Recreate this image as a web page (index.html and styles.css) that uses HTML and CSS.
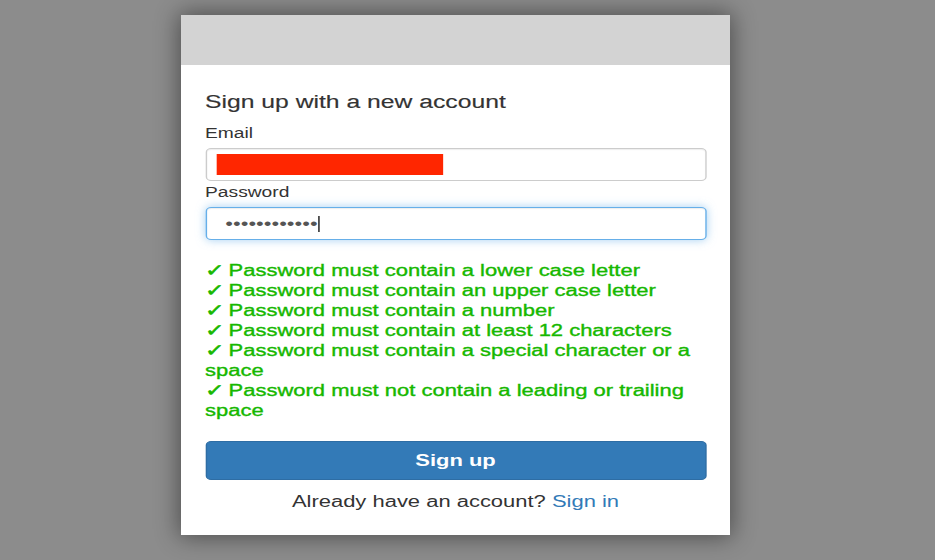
FILE: index.html
```html
<!DOCTYPE html>
<html lang="en">
<head>
<meta charset="utf-8">
<title>Sign up</title>
<link rel="stylesheet" href="styles.css">
</head>
<body>
<div class="page">
  <div class="card">
    <div class="card-header"></div>
    <div class="card-body">
      <div class="form">
        <div class="title">Sign up with a new account</div>
        <div class="label label-email">Email</div>
        <div class="field">
          <span class="redact"></span>
        </div>
        <div class="label label-password">Password</div>
        <div class="field field-focus">
          <span class="dots">&#8226;&#8226;&#8226;&#8226;&#8226;&#8226;&#8226;&#8226;&#8226;&#8226;&#8226;&#8226;</span><span class="caret"></span>
        </div>
        <ul class="rules">
          <li><span class="check">&#10003;</span> Password must contain a lower case letter</li>
          <li><span class="check">&#10003;</span> Password must contain an upper case letter</li>
          <li><span class="check">&#10003;</span> Password must contain a number</li>
          <li><span class="check">&#10003;</span> Password must contain at least 12 characters</li>
          <li><span class="check">&#10003;</span> Password must contain a special character or a space</li>
          <li><span class="check">&#10003;</span> Password must not contain a leading or trailing space</li>
        </ul>
        <button class="btn">Sign up</button>
        <div class="signin">Already have an account? <a class="link" href="#">Sign in</a></div>
      </div>
    </div>
  </div>
</div>
</body>
</html>
```
FILE: styles.css
```css
html, body {
  margin: 0;
  padding: 0;
}
body {
  background: #8c8c8c;
  font-family: "Liberation Sans", Arial, Helvetica, sans-serif;
  color: #333333;
}
.page {
  height: 560px;
  box-sizing: border-box;
  padding-top: 15px;
  padding-left: 181px;
  overflow: hidden;
}
.card {
  width: 549px;
  background: #ffffff;
  box-shadow: 0 0 22px 2px rgba(0, 0, 0, 0.45);
}
.card-header {
  height: 50px;
  background: #d3d3d3;
}
.card-body {
  padding-bottom: 23px;
}
.form {
  width: 400px;
  box-sizing: border-box;
  padding: 27px 17.5px 0;
  transform: scaleX(1.3725);
  transform-origin: 0 0;
}
.title {
  font-size: 18px;
  line-height: 20px;
  color: #333333;
  -webkit-text-stroke: 0.15px #333333;
}
.label {
  font-size: 14px;
  line-height: 20px;
  color: #333333;
  margin-bottom: 5px;
}
.label-email {
  margin-top: 11px;
}
.label-password {
  margin-top: 1px;
}
.field {
  height: 33px;
  box-sizing: border-box;
  border: 1px solid #cccccc;
  border-radius: 4px;
  background: #ffffff;
  box-shadow: inset 0 1px 1px rgba(0, 0, 0, 0.075);
  display: flex;
  align-items: center;
}
.redact {
  display: block;
  width: 165px;
  height: 21px;
  margin-left: 7.75px;
  background: #ff2600;
}
.field-focus {
  border-color: #66afe9;
  box-shadow: inset 0 1px 1px rgba(0, 0, 0, 0.075), 0 0 8px rgba(102, 175, 233, 0.6);
}
.dots {
  font-size: 16px;
  line-height: 20px;
  color: #555555;
  margin-left: 13.8px;
}
.caret {
  display: block;
  width: 1px;
  height: 16px;
  background: #111111;
  margin-left: 0.5px;
}
.rules {
  list-style: none;
  margin: 21px 0 0;
  padding: 0;
  font-size: 16px;
  line-height: 20px;
  color: #16b800;
  -webkit-text-stroke: 0.35px #16b800;
}
.check {
  font-family: "DejaVu Sans", sans-serif;
  font-size: 17px;
  line-height: 1;
  font-weight: bold;
  margin-right: -1.5px;
  -webkit-text-stroke: 0.6px #16b800;
}
.btn {
  display: block;
  width: 100%;
  height: 39px;
  margin-top: 20px;
  padding: 1px 0 0;
  box-sizing: border-box;
  border: 1px solid #2e6da4;
  border-radius: 4px;
  background: #337ab7;
  color: #ffffff;
  font-family: "Liberation Sans", Arial, Helvetica, sans-serif;
  font-size: 16px;
  font-weight: bold;
  line-height: 36px;
  text-align: center;
}
.signin {
  margin-top: 12px;
  font-size: 16px;
  line-height: 20px;
  text-align: center;
  color: #333333;
}
.link {
  color: #337ab7;
  text-decoration: none;
}
```
